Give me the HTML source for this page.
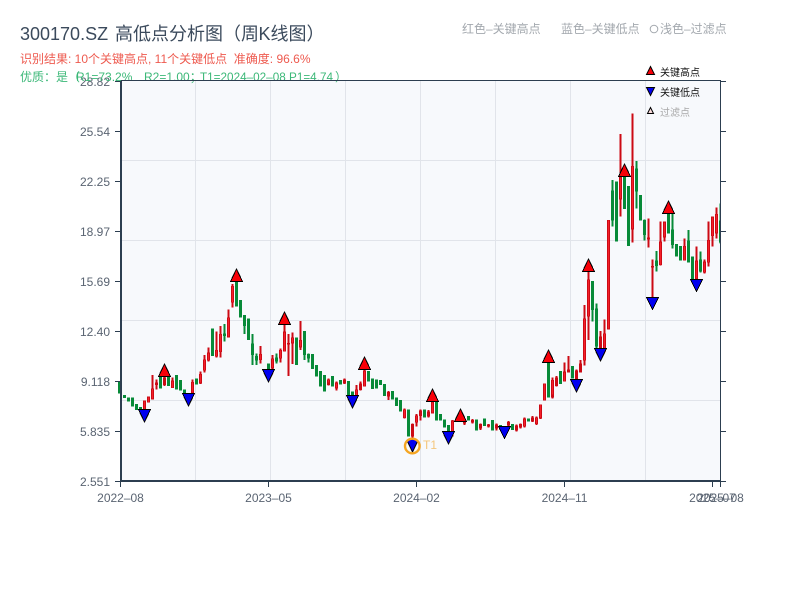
<!DOCTYPE html>
<html lang="zh"><head><meta charset="utf-8"><title>300170.SZ 高低点分析图</title>
<style>
html,body{margin:0;padding:0;background:#fff;width:800px;height:600px;overflow:hidden}
svg{display:block;position:absolute;left:0;top:0}
text{font-family:"Liberation Sans","Noto Sans CJK SC",sans-serif}
.ax{font-size:12px;fill:#5a6472}
.lg{font-size:12px;fill:#a3a8ae}
.cw{font-size:10px;fill:#111}
path.w,path.b,path.ri{shape-rendering:crispEdges}
.w{fill:none;stroke-width:6}
.b{fill:none;stroke-width:9}
.rw{stroke:#cc0a14}.rb{stroke:#cc0a14}.ri{fill:none;stroke:#f5202a;stroke-width:3.2}
.gw,.gb{stroke:#078a38}
.mk path{shape-rendering:crispEdges}
</style></head><body>
<svg width="800" height="600" viewBox="0 0 800 600" xmlns="http://www.w3.org/2000/svg">
<defs><clipPath id="t1c"><circle cx="412.300" cy="446" r="7"/></clipPath></defs>
<rect x="121" y="81" width="600" height="400" fill="#f7f9fc"/>
<path d="M195.500 81V480M270.500 81V480M345.500 81V480M420.500 81V480M495.500 81V480M570.500 81V480M645.500 81V480M121 160.500H720M121 240.500H720M121 320.500H720M121 400.500H720" stroke="#e1e4ea" stroke-width="1" fill="none"/>

<svg x="0" y="0" width="721" height="600" viewBox="0 0 721 600">
<g transform="translate(110.170,260) scale(.33333)">
<path class="w gw" d="M343 192V245M403 165V222M427 222V315M439 280V315M499 280V310M583 213V300M595 280V308"/>
<path class="b gb" d="M28 365V400M43 405V414M55 412V424M67 412V440M79 432V450M91 441V450M151 350V386M175 350V378M199 345V388M211 360V392M223 388V400M259 355V374M307 205V288M343 220V228M379 65V140M391 120V172M403 165V198M415 175V240M427 250V285M439 288V302M475 310V330M499 292V305M559 232V315M583 213V285M595 282V295M607 282V327M619 315V350M631 333V380M643 345V395"/>
<path class="w rw" d="M127 345V418M139 358V388M163 350V378M187 352V384M247 358V400M271 335V372M283 285V338M295 262V304M319 215V293M331 198V293M355 148V232M367 72V143M451 258V310M487 285V340M511 265V308M523 190V275M535 222V348M547 218V312M571 183V270"/>
<path class="b rb" d="M103 422V450M115 410V428M127 385V418M139 368V375M163 352V375M187 362V384M247 366V400M271 342V370M283 298V332M295 278V302M319 270V290M331 222V276M355 172V232M367 78V128M451 282V300M487 295V325M511 270V296M523 215V275M535 249V253M547 232V250M571 240V262M655 358V375"/>
<path class="ri" d="M103 424V448M115 412V426M127 387V416M187 364V382M247 368V398M271 344V368M283 300V330M295 280V300M319 272V288M331 224V274M355 174V230M367 80V126M451 284V298M487 297V323M511 272V294M523 217V273M547 234V248M571 242V260M655 360V373"/>
</g>
<g transform="translate(320.170,340) scale(.33333)">
<path class="b gb" d="M37 108V140M61 120V133M85 123V165M97 155V170M145 93V125M157 115V147M169 118V145M181 120V135M193 132V168M217 153V178M229 172V198M241 180V215M265 208V290M313 208V232M349 185V242M361 222V242M373 238V262M385 255V285M409 235V245M445 228V242M469 238V272M493 235V258M517 240V272M541 255V268M577 252V270M625 235V245M685 65V172"/>
<path class="w rw" d="M25 115V137M49 125V152M73 115V132M109 135V170M121 125V152M133 70V140M205 153V180M253 205V236M277 250V310M289 222V260M301 208V242M325 210V232M337 170V220M397 240V290M433 240V255M457 237V250M481 250V270M505 252V262M529 250V272M565 243V258M589 253V275M601 250V265M613 232V263M637 228V246M649 230V255M661 193V237M673 130V182M697 118V175M709 110V140"/>
<path class="b rb" d="M25 118V130M49 128V145M73 118V130M109 148V168M121 130V150M133 92V140M205 156V170M253 208V234M277 252V290M289 226V248M301 212V228M325 214V230M337 186V220M397 242V275M433 243V250M457 240V248M481 252V266M505 254V260M529 254V266M565 246V256M589 256V272M601 252V262M613 236V260M637 232V244M649 232V252M661 195V235M673 132V180M697 120V172M709 112V138"/>
<path class="ri" d="M25 120V128M49 130V143M109 150V166M133 94V138M253 210V232M289 228V246M337 188V218M397 244V273M613 238V258M649 234V250M661 197V233M673 134V178M697 122V170M709 114V136"/>
</g>
<g transform="translate(530.170,250) scale(.33333)">
<path class="b gb" d="M55 338V443M91 363V402M127 348V385M187 93V180M199 175V290"/>
<path class="w gw" d="M187 93V215M199 160V295"/>
<path class="w rw" d="M139 358V420M67 382V443M79 378V410M103 337V395M115 318V368M151 330V368M163 165V347M175 65V270M211 243V320M223 208V308"/>
<path class="b rb" d="M31 463V505M43 400V452M67 390V435M79 382V392M103 365V395M115 358V368M139 362V388M151 340V368M163 205V332M175 88V200M211 260V295M223 250V305"/>
<path class="ri" d="M31 465V503M43 402V450M67 392V433M103 367V393M163 207V330M175 90V198M223 252V303"/>
</g>
<g transform="translate(530.170,100) scale(.33333)">
<path class="w gw" d="M247 240V380M319 183V325M343 358V422M379 453V515M427 340V445M475 390V488M511 455V518M571 310V430"/>
<path class="b gb" d="M247 272V362M259 245V425M283 225V327M295 258V438M319 205V275M331 285V362M343 360V405M379 482V498M415 340V400M427 388V435M439 432V470M451 438V482M475 422V488M487 470V538M511 478V515M571 362V428"/>
<path class="w rw" d="M271 102V350M307 40V428M355 355V443M367 478V592M391 365V497M403 365V425M463 415V482M499 440V538M523 478V520M535 365V500M547 350V440M559 322V415"/>
<path class="b rb" d="M235 360V688M271 230V298M307 198V388M355 412V418M367 498V502M391 425V495M403 365V412M463 438V482M499 482V538M523 485V518M535 420V488M547 350V408M559 342V400"/>
<path class="ri" d="M235 362V686M271 232V296M307 200V386M391 427V493M403 367V410M463 440V480M499 484V536M523 487V516M535 422V486M547 352V406M559 344V398"/>
</g>
</svg>

<!-- axes -->
<path d="M121 80.500H720.500V481" stroke="#2c3e50" stroke-width="1" fill="none"/>
<path d="M121 80V482" stroke="#2c3e50" stroke-width="2" fill="none"/>
<path d="M120 481H721" stroke="#2c3e50" stroke-width="2" fill="none"/>
<path d="M115 81.500H120M115 131.500H120M115 181.500H120M115 231.500H120M115 281.500H120M115 331.500H120M115 381.500H120M115 431.500H120M115 481.500H120M721 81.500H726M721 131.500H726M721 181.500H726M721 231.500H726M721 281.500H726M721 331.500H726M721 381.500H726M721 431.500H726M721 481.500H726M120.500 482V487M268.500 482V487M416.500 482V487M564.500 482V487M712.500 482V487M720.500 482V487" stroke="#2c3e50" stroke-width="1" fill="none"/>

<!-- markers -->
<g class="mk" fill="#f80008" stroke="#000" stroke-width="1">
<path d="M164.500 364L170.500 376.500H158.500z"/>
<path d="M236.500 269L242.500 281.500H230.500z"/>
<path d="M284.500 312L290.500 324.500H278.500z"/>
<path d="M364.500 357L370.500 369.500H358.500z"/>
<path d="M432.500 389L438.500 401.500H426.500z"/>
<path d="M460.500 409L466.500 421.500H454.500z"/>
<path d="M548.500 350L554.500 362.500H542.500z"/>
<path d="M588.500 259L594.500 271.500H582.500z"/>
<path d="M624.500 164L630.500 176.500H618.500z"/>
<path d="M668.500 201L674.500 213.500H662.500z"/>
</g>
<g class="mk" fill="#0000f0" stroke="#000" stroke-width="1">
<path d="M144.500 422L150.500 409.500H138.500z"/>
<path d="M188.500 406L194.500 393.500H182.500z"/>
<path d="M268.500 382L274.500 369.500H262.500z"/>
<path d="M352.500 408L358.500 395.500H346.500z"/>
<path d="M448.500 444L454.500 431.500H442.500z"/>
<path d="M504.500 438.500L510.500 426.500H498.500z"/>
<path d="M576.500 392L582.500 379.500H570.500z"/>
<path d="M600.500 361L606.500 348.500H594.500z"/>
<path d="M652.500 309.500L658.500 297.500H646.500z"/>
<path d="M696.500 291.500L702.500 279.500H690.500z"/>
</g>
<g clip-path="url(#t1c)"><path d="M412.500 452L418.500 439.500H406.500z" fill="#0000f0" stroke="#000" stroke-width="1"/></g>
<circle cx="412.300" cy="446" r="7.300" fill="none" stroke="#f5a623" stroke-width="2.400"/>
<text x="423" y="449" font-size="12" fill="#f39c12" fill-opacity=".55">T1</text>

<!-- axis labels -->
<g text-anchor="end">
<text x="110" y="86" class="ax">28.82</text>
<text x="110" y="136" class="ax">25.54</text>
<text x="110" y="186" class="ax">22.25</text>
<text x="110" y="236" class="ax">18.97</text>
<text x="110" y="286" class="ax">15.69</text>
<text x="110" y="336" class="ax">12.40</text>
<text x="110" y="386" class="ax">9.118</text>
<text x="110" y="436" class="ax">5.835</text>
<text x="110" y="486" class="ax">2.551</text>
</g>
<g text-anchor="middle">
<text x="120.500" y="502" class="ax">2022–08</text>
<text x="268.500" y="502" class="ax">2023–05</text>
<text x="416.500" y="502" class="ax">2024–02</text>
<text x="564.500" y="502" class="ax">2024–11</text>
<text x="712.500" y="502" class="ax">2025–07</text>
<text x="720.500" y="502" class="ax">2025–08</text>
</g>

<!-- titles -->
<text y="40" font-size="18" fill="#3b4a5c"><tspan x="20">300170.SZ</tspan><tspan x="115">高低点分析图（周</tspan><tspan x="258.500">K</tspan><tspan x="270.500">线图）</tspan></text>
<text x="20" y="63" font-size="12" fill="#ee5a4f" xml:space="preserve">识别结果: 10个关键高点, 11个关键低点  准确度: 96.6%</text>
<text y="81" font-size="12" fill="#3cb878"><tspan x="20">优质：是（</tspan><tspan x="76">R1=73.2%</tspan><tspan x="144">R2=1.00；</tspan><tspan x="200" textLength="133" lengthAdjust="spacingAndGlyphs">T1=2024–02–08 P1=4.74</tspan><tspan x="335">）</tspan></text>
<path d="M121 80.500H720" stroke="#2c3e50" stroke-width="1"/>

<text x="462" y="33" class="lg">红色–关键高点</text>
<text x="561" y="33" class="lg">蓝色–关键低点</text>
<circle cx="654" cy="29" r="3.800" fill="none" stroke="#a3a8ae" stroke-width="1"/>
<text x="660" y="33" class="lg">浅色–过滤点</text>

<!-- chart legend -->
<path d="M650.500 66.500L654.500 74.500H646.500z" fill="#f80008" stroke="#000" stroke-width="1"/>
<path d="M650.500 95.500L654.500 87.500H646.500z" fill="#0000f0" stroke="#000" stroke-width="1"/>
<path d="M650.500 107.500L653.500 113.500H647.500z" fill="#fbdcdc" stroke="#000" stroke-width="1"/>
<text x="660" y="76" class="cw">关键高点</text>
<text x="660" y="96" class="cw">关键低点</text>
<text x="660" y="116" class="cw" style="fill:#a8a8a8">过滤点</text>
</svg>
</body></html>
